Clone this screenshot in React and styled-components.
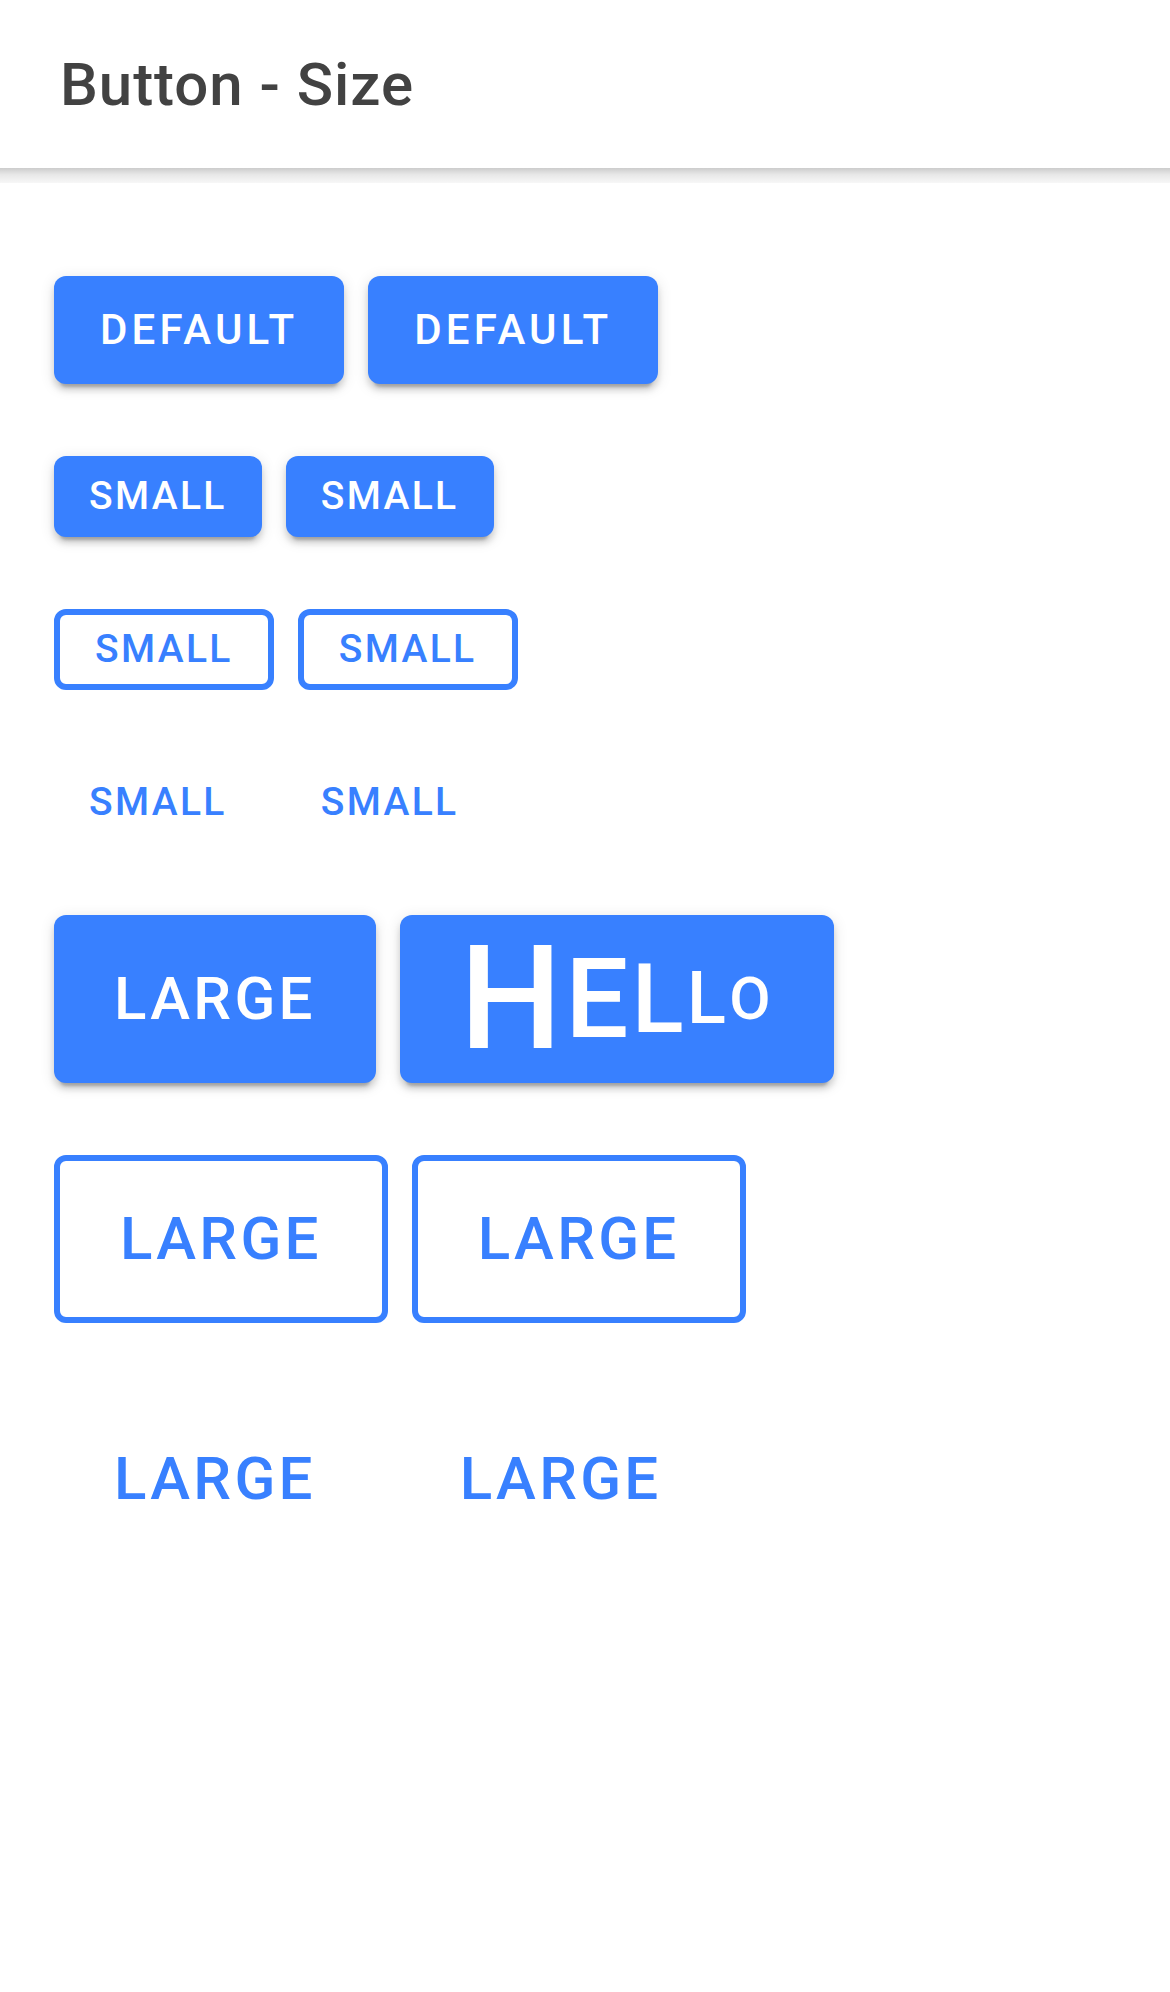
import React from 'react'
import styled, { createGlobalStyle, css } from 'styled-components'

const GlobalStyle = createGlobalStyle`
  html, body {
    margin: 0;
    padding: 0;
    background: #fff;
  }
  body {
    font-family: Roboto, "Noto Sans", "Liberation Sans", sans-serif;
    -webkit-font-smoothing: antialiased;
  }
`

const primary = '#3880ff'

const Page = styled.div`
  min-height: 1992px;
  background: #fff;
`

const Header = styled.header`
  position: relative;
  height: 168px;
  padding: 0 60px;
  display: flex;
  align-items: center;
  background: #fff;
  &::after {
    content: '';
    position: absolute;
    left: 0;
    right: 0;
    bottom: -15px;
    height: 15px;
    background: linear-gradient(rgba(0, 0, 0, 0.2), rgba(0, 0, 0, 0.09) 45%, rgba(0, 0, 0, 0.03));
  }
`

const Title = styled.h1`
  margin: 0;
  font-size: 60px;
  font-weight: 500;
  letter-spacing: 0.016em;
  color: #424242;
`

const Content = styled.main`
  padding: 108px 54px;
  display: flex;
  flex-direction: column;
  gap: 72px;
`

const Row = styled.div`
  display: flex;
  align-items: center;
  gap: 24px;
`

const sizes = {
  default: css`
    height: 108px;
    font-size: 42px;
    letter-spacing: 4.2px;
    padding: 0 46px;
  `,
  small: css`
    height: 81px;
    font-size: 39px;
    letter-spacing: 0.06em;
    padding: 0 35px;
  `,
  large: css`
    height: 168px;
    font-size: 60px;
    letter-spacing: 3.3px;
    padding: 0 60px;
  `,
}

const fills = {
  solid: css`
    background: ${primary};
    color: #fff;
    border: none;
    box-shadow: 0 9px 3px -6px rgba(0, 0, 0, 0.2), 0 6px 6px 0 rgba(0, 0, 0, 0.14), 0 3px 15px 0 rgba(0, 0, 0, 0.12);
  `,
  outline: css`
    background: transparent;
    color: ${primary};
    border: 6px solid ${primary};
  `,
  clear: css`
    background: transparent;
    color: ${primary};
    border: none;
  `,
}

const Button = styled.button`
  box-sizing: border-box;
  display: inline-flex;
  align-items: center;
  justify-content: center;
  font-family: inherit;
  font-weight: 500;
  line-height: 1;
  text-transform: uppercase;
  border-radius: 12px;
  cursor: pointer;
  ${({ $size }) => sizes[$size || 'default']}
  ${({ $fill }) => fills[$fill || 'solid']}
`

const Letter = styled.span`
  font-size: ${({ $px }) => $px}px;
  line-height: 1;
`

const hello = [
  ['H', 144],
  ['E', 112],
  ['L', 96],
  ['L', 72],
  ['O', 60],
]

const Pair = ({ size, fill, label }) => (
  <Row>
    <Button $size={size} $fill={fill}>{label}</Button>
    <Button $size={size} $fill={fill}>{label}</Button>
  </Row>
)

export default function App() {
  return (
    <Page>
      <GlobalStyle />
      <Header>
        <Title>Button - Size</Title>
      </Header>
      <Content>
        <Pair size="default" fill="solid" label="Default" />
        <Pair size="small" fill="solid" label="Small" />
        <Pair size="small" fill="outline" label="Small" />
        <Pair size="small" fill="clear" label="Small" />
        <Row>
          <Button $size="large">Large</Button>
          <Button $size="large">
            {hello.map(([ch, px], i) => (
              <Letter key={i} $px={px}>{ch}</Letter>
            ))}
          </Button>
        </Row>
        <Pair size="large" fill="outline" label="Large" />
        <Pair size="large" fill="clear" label="Large" />
      </Content>
    </Page>
  )
}
